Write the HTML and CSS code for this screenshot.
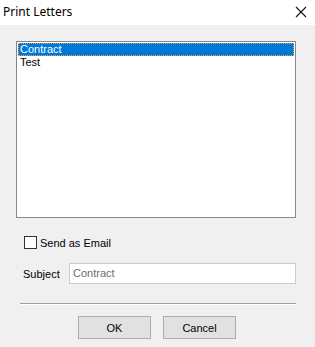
FILE: index.html
```html
<!DOCTYPE html>
<html lang="en">
<head>
    <meta charset="UTF-8">
    <title>Print Letters</title>
    <link rel="stylesheet" href="styles.css">
</head>
<body>
<div class="dialog">
    <div class="titlebar">
        <span class="title">Print Letters</span>
        <svg class="close" width="12" height="12" viewBox="0 0 12 12">
            <path d="M1 1L11 11M11 1L1 11" stroke="#111" stroke-width="1.1" fill="none"/>
        </svg>
    </div>
    <div class="content">
        <div class="listbox">
            <div class="list-item selected">Contract</div>
            <div class="list-item">Test</div>
        </div>
        <div class="check-row">
            <span class="checkbox"></span>
            <span class="check-label">Send as Email</span>
        </div>
        <div class="subject-row">
            <span class="subject-label">Subject</span>
            <div class="textbox">Contract</div>
        </div>
        <div class="separator"></div>
        <div class="btn-row">
            <button class="btn">OK</button>
            <button class="btn">Cancel</button>
        </div>
    </div>
</div>
</body>
</html>
```

FILE: styles.css
```css
html{
    height: 100%;
}
body{
    height: 100%;
    margin: 0;
    padding: 0;
    background-color: #f0f0f0;
    font-family: "Liberation Sans", Arial, sans-serif;
    font-size: 11px;
    color: #000;
}
.dialog{
    width: 315px;
    height: 347px;
    display: flex;
    flex-direction: column;
}
.titlebar{
    display: flex;
    align-items: center;
    justify-content: space-between;
    height: 25px;
    padding: 0 8px 0 3px;
    background-color: #fff;
}
.title{
    font-family: "Noto Sans", "Open Sans", sans-serif;
    font-size: 12px;
    margin-top: -2px;
}
.close{
    display: block;
    margin-top: -2px;
}
.content{
    display: flex;
    flex-direction: column;
    padding: 16px 19px 0 16px;
}
.listbox{
    box-sizing: border-box;
    height: 177px;
    border: 1px solid #828790;
    background-color: #fff;
    padding: 1px;
}
.list-item{
    height: 13px;
    line-height: 13px;
    padding-left: 2px;
}
.list-item.selected{
    box-sizing: border-box;
    background-color: #0078d7;
    color: #fff;
    padding-left: 1px;
    border: 1px dotted #f0a040;
    line-height: 11px;
}
.check-row{
    display: flex;
    align-items: center;
    margin-top: 18px;
    padding-left: 8px;
    height: 13px;
}
.checkbox{
    box-sizing: border-box;
    width: 13px;
    height: 13px;
    border: 1px solid #333;
    background-color: #fff;
}
.check-label{
    margin-left: 3px;
}
.subject-row{
    display: flex;
    align-items: center;
    margin-top: 14px;
}
.subject-label{
    padding-left: 7px;
    box-sizing: border-box;
    width: 53px;
}
.textbox{
    flex: 1;
    box-sizing: border-box;
    height: 21px;
    line-height: 19px;
    border: 1px solid #cccccc;
    background-color: #fff;
    color: #6d6d6d;
    padding-left: 3px;
}
.separator{
    margin: 19px 0 0 4px;
    height: 1px;
    background-color: #a0a0a0;
    border-bottom: 1px solid #fff;
}
.btn-row{
    display: flex;
    justify-content: center;
    gap: 12px;
    margin-top: 11px;
    padding-left: 2px;
}
.btn{
    width: 73px;
    height: 23px;
    background-color: #e1e1e1;
    border: 1px solid #adadad;
    font-family: "Liberation Sans", Arial, sans-serif;
    font-size: 11px;
    color: #000;
    padding: 0;
}
```
